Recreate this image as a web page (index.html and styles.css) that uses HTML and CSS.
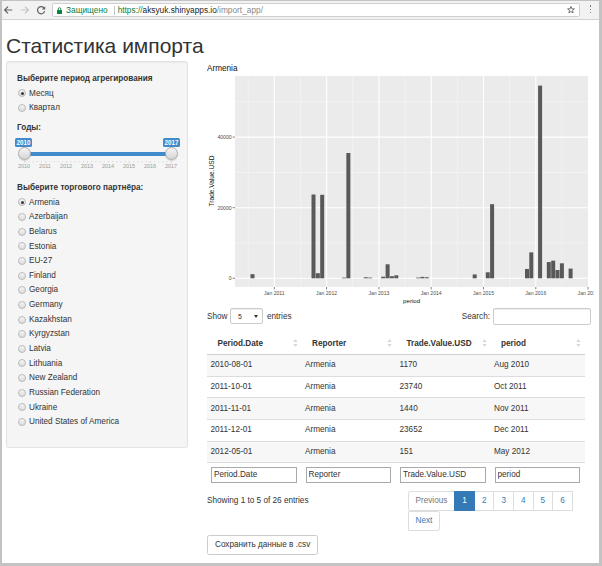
FILE: index.html
```html
<!DOCTYPE html>
<html lang="ru">
<head>
<meta charset="utf-8">
<title>Статистика импорта</title>
<link rel="stylesheet" href="styles.css">
</head>
<body>
<div class="window">
  <div class="toolbar">
    <div class="nav">
      <svg class="nav-icon" width="10" height="10" viewBox="0 0 10 10"><path d="M9.2 5H1.6M5 1.6L1.6 5 5 8.4" fill="none" stroke="#5f6368" stroke-width="1.2"/></svg>
      <svg class="nav-icon nav-fwd" width="10" height="10" viewBox="0 0 10 10"><path d="M0.8 5H8.4M5 1.6L8.4 5 5 8.4" fill="none" stroke="#c4c4c4" stroke-width="1.2"/></svg>
      <svg class="nav-icon nav-reload" width="10" height="10" viewBox="0 0 10 10"><path d="M8.2 3.3A3.6 3.6 0 1 0 8.6 6.2" fill="none" stroke="#5f6368" stroke-width="1.2"/><path d="M9.2 1.2V4.6H5.8z" fill="#5f6368"/></svg>
    </div>
    <div class="omnibox">
      <svg class="lock" width="5" height="7" viewBox="0 0 5 7"><path d="M1.2 3V2a1.3 1.3 0 0 1 2.6 0v1" fill="none" stroke="#0b8043" stroke-width="0.9"/><rect x="0" y="3" width="5" height="4" rx="0.5" fill="#0b8043"/></svg>
      <span class="secure">Защищено</span>
      <span class="sep"></span>
      <span class="url"><span class="scheme">https://</span><span class="host">aksyuk.shinyapps.io</span><span class="path">/import_app/</span></span>
      <svg class="star" width="8" height="8" viewBox="0 0 8 8"><polygon points="4,0.4 4.88,2.79 7.42,2.89 5.43,4.46 6.12,6.91 4,5.5 1.88,6.91 2.57,4.46 0.58,2.89 3.12,2.79" fill="none" stroke="#555" stroke-width="0.8" stroke-linejoin="round"/></svg>
    </div>
    <div class="menu"><span></span><span></span><span></span></div>
  </div>

  <div class="page">
    <h2 class="title">Статистика импорта</h2>
    <div class="layout">
      <aside class="well">
        <div class="lbl">Выберите период агрегирования</div>
        <div class="radios">
          <div class="radio"><span class="rb on"></span>Месяц</div>
          <div class="radio"><span class="rb"></span>Квартал</div>
        </div>

        <div class="lbl lbl-years">Годы:</div>
        <div class="slider">
          <div class="bar"></div>
          <div class="handle handle-from"></div>
          <div class="handle handle-to"></div>
          <div class="badge badge-from">2010</div>
          <div class="badge badge-to">2017</div>
          <div class="grid">
            <svg class="grid-ticks" width="168" height="2.4" viewBox="0 0 168 2.4">
              <g stroke="#c4c4c4" stroke-width="0.6">
                <path d="M10.5 0V2.4M31.5 0V2.4M52.5 0V2.4M73.5 0V2.4M94.5 0V2.4M115.5 0V2.4M136.5 0V2.4M157.5 0V2.4"/>
                <path d="M14.7 0V1.3M18.9 0V1.3M23.1 0V1.3M27.3 0V1.3M35.7 0V1.3M39.9 0V1.3M44.1 0V1.3M48.3 0V1.3M56.7 0V1.3M60.9 0V1.3M65.1 0V1.3M69.3 0V1.3M77.7 0V1.3M81.9 0V1.3M86.1 0V1.3M90.3 0V1.3M98.7 0V1.3M102.9 0V1.3M107.1 0V1.3M111.3 0V1.3M119.7 0V1.3M123.9 0V1.3M128.1 0V1.3M132.3 0V1.3M140.7 0V1.3M144.9 0V1.3M149.1 0V1.3M153.3 0V1.3"/>
              </g>
            </svg>
            <div class="grid-labels">
              <span>2010</span><span>2011</span><span>2012</span><span>2013</span><span>2014</span><span>2015</span><span>2016</span><span>2017</span>
            </div>
          </div>
        </div>

        <div class="lbl lbl-partner">Выберите торгового партнёра:</div>
        <div class="radios radios-partner">
          <div class="radio"><span class="rb on"></span>Armenia</div>
          <div class="radio"><span class="rb"></span>Azerbaijan</div>
          <div class="radio"><span class="rb"></span>Belarus</div>
          <div class="radio"><span class="rb"></span>Estonia</div>
          <div class="radio"><span class="rb"></span>EU-27</div>
          <div class="radio"><span class="rb"></span>Finland</div>
          <div class="radio"><span class="rb"></span>Georgia</div>
          <div class="radio"><span class="rb"></span>Germany</div>
          <div class="radio"><span class="rb"></span>Kazakhstan</div>
          <div class="radio"><span class="rb"></span>Kyrgyzstan</div>
          <div class="radio"><span class="rb"></span>Latvia</div>
          <div class="radio"><span class="rb"></span>Lithuania</div>
          <div class="radio"><span class="rb"></span>New Zealand</div>
          <div class="radio"><span class="rb"></span>Russian Federation</div>
          <div class="radio"><span class="rb"></span>Ukraine</div>
          <div class="radio"><span class="rb"></span>United States of America</div>
        </div>
      </aside>

      <main class="main">
        <svg class="chart" width="387" height="246" viewBox="207 61 387 246">
          <text x="207" y="70.6" class="c-title">Armenia</text>
          <rect x="235" y="76" width="353" height="211" fill="#ebebeb"/>
          <g stroke="#f7f7f7" stroke-width="0.6">
            <path d="M235 243H588M235 172.4H588M235 101.8H588"/>
            <path d="M248.15 76V287M300.45 76V287M352.7 76V287M405.05 76V287M457.35 76V287M509.65 76V287M561.95 76V287"/>
          </g>
          <g stroke="#ffffff" stroke-width="1.1">
            <path d="M235 278.3H588M235 207.7H588M235 137.1H588"/>
            <path d="M274.3 76V287M326.6 76V287M378.9 76V287M431.2 76V287M483.5 76V287M535.8 76V287"/>
          </g>
          <g fill="#595959">
            <rect x="250.5" y="274.17" width="4" height="4.13"/>
            <rect x="311.5" y="194.5" width="4" height="83.8"/>
            <rect x="315.85" y="273.22" width="4" height="5.08"/>
            <rect x="320.2" y="194.81" width="4" height="83.49"/>
            <rect x="342.0" y="277.6" width="4" height="0.7"/>
            <rect x="346.35" y="153.0" width="4" height="125.3"/>
            <rect x="363.8" y="277.24" width="4" height="1.06"/>
            <rect x="368.1" y="277.59" width="4" height="0.71"/>
            <rect x="381.2" y="276.71" width="4" height="1.59"/>
            <rect x="385.6" y="264.3" width="4" height="14.0"/>
            <rect x="389.9" y="276.18" width="4" height="2.12"/>
            <rect x="394.3" y="275.3" width="4" height="3.0"/>
            <rect x="416.1" y="277.59" width="4" height="0.71"/>
            <rect x="420.4" y="276.89" width="4" height="1.41"/>
            <rect x="424.8" y="277.24" width="4" height="1.06"/>
            <rect x="472.7" y="274.42" width="4" height="3.88"/>
            <rect x="485.8" y="272.3" width="4" height="6.0"/>
            <rect x="490.1" y="204.17" width="4" height="74.13"/>
            <rect x="525.0" y="268.95" width="4" height="9.35"/>
            <rect x="529.3" y="252.35" width="4" height="25.95"/>
            <rect x="538.1" y="85.6" width="4" height="192.7"/>
            <rect x="546.8" y="262.06" width="4" height="16.24"/>
            <rect x="551.2" y="260.65" width="4" height="17.65"/>
            <rect x="555.5" y="270.0" width="4" height="8.3"/>
            <rect x="559.9" y="263.3" width="4" height="15.0"/>
            <rect x="568.6" y="268.59" width="4" height="9.71"/>
          </g>
          <g stroke="#333" stroke-width="0.6">
            <path d="M232.6 278.3H235M232.6 207.7H235M232.6 137.1H235"/>
            <path d="M274.3 287V289.4M326.6 287V289.4M378.9 287V289.4M431.2 287V289.4M483.5 287V289.4M535.8 287V289.4M588.1 287V289.4"/>
          </g>
          <g class="c-tick" text-anchor="end">
            <text x="231.6" y="280.1">0</text>
            <text x="231.6" y="209.5">20000</text>
            <text x="231.6" y="138.9">40000</text>
          </g>
          <g class="c-tick" text-anchor="middle">
            <text x="274.3" y="294.6">Jan 2011</text>
            <text x="326.6" y="294.6">Jan 2012</text>
            <text x="378.9" y="294.6">Jan 2013</text>
            <text x="431.2" y="294.6">Jan 2014</text>
            <text x="483.5" y="294.6">Jan 2015</text>
            <text x="535.8" y="294.6">Jan 2016</text>
            <text x="588.1" y="294.6">Jan 2017</text>
          </g>
          <text x="411.6" y="302.9" class="c-axis" text-anchor="middle">period</text>
          <text x="213.6" y="181" class="c-axis c-ytitle" text-anchor="middle" transform="rotate(-90 213.6 181)">Trade.Value.USD</text>
        </svg>

        <div class="dt-top">
          <div class="len">Show<span class="select"><span>5</span><svg width="4" height="3" viewBox="0 0 4 3"><path d="M0 0H4L2 3z" fill="#333"/></svg></span>entries</div>
          <label class="search">Search:<input class="search-input" type="text"></label>
        </div>

        <table class="table">
          <thead>
            <tr>
              <th><div class="th-in"><span>Period.Date</span><svg class="sort" width="5" height="8" viewBox="0 0 5 8"><path d="M2.5 0.3L4.6 3H0.4z M2.5 7.7L0.4 5H4.6z" fill="#d6d6d6"/></svg></div></th>
              <th><div class="th-in"><span>Reporter</span><svg class="sort" width="5" height="8" viewBox="0 0 5 8"><path d="M2.5 0.3L4.6 3H0.4z M2.5 7.7L0.4 5H4.6z" fill="#d6d6d6"/></svg></div></th>
              <th><div class="th-in"><span>Trade.Value.USD</span><svg class="sort" width="5" height="8" viewBox="0 0 5 8"><path d="M2.5 0.3L4.6 3H0.4z M2.5 7.7L0.4 5H4.6z" fill="#d6d6d6"/></svg></div></th>
              <th><div class="th-in"><span>period</span><svg class="sort" width="5" height="8" viewBox="0 0 5 8"><path d="M2.5 0.3L4.6 3H0.4z M2.5 7.7L0.4 5H4.6z" fill="#d6d6d6"/></svg></div></th>
            </tr>
          </thead>
          <tbody>
            <tr><td>2010-08-01</td><td>Armenia</td><td>1170</td><td>Aug 2010</td></tr>
            <tr><td>2011-10-01</td><td>Armenia</td><td>23740</td><td>Oct 2011</td></tr>
            <tr><td>2011-11-01</td><td>Armenia</td><td>1440</td><td>Nov 2011</td></tr>
            <tr><td>2011-12-01</td><td>Armenia</td><td>23652</td><td>Dec 2011</td></tr>
            <tr><td>2012-05-01</td><td>Armenia</td><td>151</td><td>May 2012</td></tr>
          </tbody>
          <tfoot>
            <tr>
              <td><input class="filter" type="text" value="Period.Date"></td>
              <td><input class="filter" type="text" value="Reporter"></td>
              <td><input class="filter" type="text" value="Trade.Value.USD"></td>
              <td><input class="filter" type="text" value="period"></td>
            </tr>
          </tfoot>
        </table>

        <div class="dt-bottom">
          <div class="info">Showing 1 to 5 of 26 entries</div>
          <div class="pager">
            <span class="pg pg-prev">Previous</span>
            <span class="pg active">1</span>
            <span class="pg">2</span>
            <span class="pg">3</span>
            <span class="pg">4</span>
            <span class="pg">5</span>
            <span class="pg">6</span>
            <span class="pg pg-next">Next</span>
          </div>
        </div>

        <button class="btn" type="button">Сохранить данные в .csv</button>
      </main>
    </div>
  </div>
</div>
</body>
</html>
```

FILE: styles.css
```css
* { box-sizing: border-box; }
html, body { margin: 0; padding: 0; }
body {
  font-family: "Liberation Sans", Arial, sans-serif;
  font-size: 8.2px;
  line-height: 11.7px;
  color: #333;
  background: #fff;
}

.window {
  width: 602px;
  height: 566px;
  border-style: solid;
  border-color: #c3c3c3;
  border-width: 1px 3px 3px 2px;
  overflow: hidden;
  background: #fff;
}

/* browser toolbar */
.toolbar {
  height: 19px;
  background: #f2f2f2;
  border-bottom: 1px solid #d2d2d2;
  display: flex;
  align-items: flex-start;
}
.nav { width: 50px; height: 18px; display: flex; align-items: center; padding-left: 0.5px; flex: none; }
.nav-icon { display: block; flex: none; }
.nav-fwd { margin-left: 7.5px; }
.nav-reload { margin-left: 5.5px; }
.omnibox {
  flex: none;
  margin-top: 2px;
  width: 528px;
  height: 14px;
  border: 1px solid #cfcfcf;
  border-radius: 2px;
  background: #fff;
  display: flex;
  align-items: center;
  padding-left: 4px;
  font-size: 8.3px;
  line-height: 12px;
}
.lock { display: block; flex: none; }
.secure { color: #0b8043; margin-left: 4px; }
.sep { width: 1px; height: 9px; background: #c8c8c8; margin-left: 6px; }
.url { margin-left: 3px; white-space: nowrap; }
.scheme { color: #0b8043; }
.host { color: #222; }
.path { color: #8a8a8a; }
.star { margin-left: auto; margin-right: 3.7px; display: block; }
.menu {
  margin-left: 9.5px;
  height: 18px;
  padding-bottom: 1.4px;
  display: flex;
  flex-direction: column;
  justify-content: center;
  gap: 1.75px;
}
.menu span { display: block; width: 1.6px; height: 1.6px; background: #5f6368; border-radius: 50%; }

/* page */
.page { padding-left: 4px; }
.title {
  margin: 14.2px 0 3.7px;
  font-size: 21px;
  line-height: 23.1px;
  font-weight: normal;
  color: #333;
}
.layout { display: flex; align-items: flex-start; }

/* sidebar */
.well {
  flex: none;
  width: 182px;
  height: 387px;
  margin-right: 19px;
  padding: 11px 10px 0;
  background: #f5f5f5;
  border: 1px solid #e3e3e3;
  border-radius: 2.5px;
  box-shadow: inset 0 1px 1px rgba(0, 0, 0, .05);
}
.lbl { font-weight: bold; line-height: 12px; }
.lbl-years { margin-top: 6.65px; }
.lbl-partner { margin-top: 10px; }
.radios { margin-top: 1.2px; }
.radios-partner { margin-top: 1.05px; }
.radio { height: 14.65px; display: flex; align-items: center; }
.rb {
  flex: none;
  width: 8px;
  height: 8px;
  margin-left: 1px;
  margin-right: 3px;
  border: 1px solid #b9b9b9;
  border-radius: 50%;
  background: linear-gradient(#f6f6f6, #dcdcdc);
  display: flex;
  align-items: center;
  justify-content: center;
}
.rb.on::after { content: ""; width: 3px; height: 3px; border-radius: 50%; background: #3a3a3a; }

/* range slider widget */
.slider { position: relative; height: 38px; }
.bar {
  position: absolute;
  left: 7px;
  width: 147px;
  top: 17.85px;
  height: 4px;
  background: #428bca;
}
.handle {
  position: absolute;
  top: 13.35px;
  width: 13px;
  height: 13px;
  border-radius: 50%;
  border: 1px solid #adadad;
  background: linear-gradient(#f5f5f5, #d5d5d5);
  box-shadow: 0 1px 1px rgba(0, 0, 0, .15);
}
.handle-from { left: 0.5px; }
.handle-to { left: 147.5px; }
.badge {
  position: absolute;
  top: 3.85px;
  width: 17px;
  height: 9px;
  line-height: 9px;
  background: #428bca;
  color: #fff;
  font-size: 6.3px;
  font-weight: bold;
  text-align: center;
  border-radius: 1.5px;
}
.badge-from { left: -2px; }
.badge-to { left: 146px; }
.grid { position: absolute; left: -3.5px; top: 26.5px; }
.grid-ticks { display: block; }
.grid-labels { display: flex; }
.grid-labels span {
  width: 21px;
  text-align: center;
  font-size: 5.5px;
  line-height: 6px;
  color: #9a9a9a;
}

/* main */
.main { flex: none; width: 385px; }
.chart { display: block; }
.c-title { font-family: "Liberation Sans", Arial, sans-serif; font-size: 8.2px; fill: #111; }
.c-tick { font-family: "Liberation Sans", Arial, sans-serif; font-size: 5.1px; fill: #4d4d4d; }
.c-axis { font-family: "Liberation Sans", Arial, sans-serif; font-size: 6.1px; fill: #111; }
.c-ytitle { font-size: 6.6px; }

.dt-top {
  margin-top: 1px;
  width: 384px;
  height: 17px;
  display: flex;
  align-items: center;
  justify-content: space-between;
}
.len { display: flex; align-items: center; }
.select {
  width: 33px;
  height: 16px;
  margin: 0 4px 0 2.5px;
  padding: 0 4px 0 7px;
  border: 1px solid #ccc;
  border-radius: 2px;
  background: #fff;
  display: flex;
  align-items: center;
  justify-content: space-between;
  font-size: 7px;
  box-shadow: inset 0 1px 1px rgba(0, 0, 0, .075);
}
.select svg { display: block; }
.search { display: flex; align-items: center; }
.search-input {
  margin: 0 0 0 3px;
  width: 98px;
  height: 17px;
  border: 1px solid #ccc;
  border-radius: 2px;
  background: #fff;
  padding: 0 3px;
  font: inherit;
  box-shadow: inset 0 1px 1px rgba(0, 0, 0, .075);
}

.table {
  margin-top: 8px;
  width: 378px;
  border-collapse: collapse;
  table-layout: fixed;
}
.table th {
  padding: 4.6px 4px 4.6px 10.5px;
  text-align: left;
  font-weight: bold;
  border-bottom: 1.2px solid #cfcfcf;
}
.th-in { display: flex; justify-content: space-between; align-items: center; }
.sort { display: block; flex: none; }
.table td { padding: 4.5px 3.5px; border-top: 1px solid #ddd; }
.table tbody tr:nth-child(odd) td { background: #f7f7f7; }
.table tfoot td { padding: 3.5px 4px 4px; }
.filter {
  display: block;
  width: 85.5px;
  height: 16px;
  margin: 0;
  border: 1px solid #a9a9a9;
  padding: 0 2px;
  font: inherit;
  color: #333;
  background: #fff;
}

.dt-bottom {
  margin-top: 4.3px;
  display: grid;
  grid-template-columns: 200.5px 170px;
}
.info { padding-top: 3.5px; }
.pager { display: flex; flex-wrap: wrap; }
.pg {
  display: block;
  padding: 3.15px 7px;
  line-height: 11.7px;
  border: 1px solid #ddd;
  margin-left: -1px;
  color: #337ab7;
  background: #fff;
  position: relative;
}
.pg-prev { margin-left: 0; color: #777; border-radius: 2.3px 0 0 2.3px; }
.pg.active { background: #337ab7; border-color: #337ab7; color: #fff; z-index: 1; }
.pg-next { margin-left: 0; border-radius: 0 2.3px 2.3px 0; }

.btn {
  margin-top: 3.7px;
  display: inline-block;
  padding: 3.15px 7px;
  line-height: 11.7px;
  border: 1px solid #ccc;
  border-radius: 2.3px;
  background: #fff;
  color: #333;
  font: inherit;
}
```
